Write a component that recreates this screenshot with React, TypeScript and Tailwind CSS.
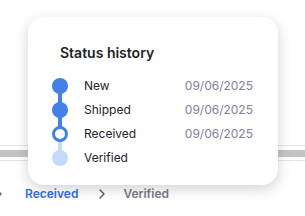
import { ChevronRight } from "lucide-react";

const steps = [
  { label: "New", date: "09/06/2025", state: "done" },
  { label: "Shipped", date: "09/06/2025", state: "done" },
  { label: "Received", date: "09/06/2025", state: "current" },
  { label: "Verified", date: "", state: "todo" },
];

function Dot({ state }: { state: string }) {
  if (state === "current") {
    return <span className="block h-4 w-4 rounded-full border-[3px] border-[#4580e6] bg-white" />;
  }
  if (state === "todo") {
    return <span className="block h-4 w-4 rounded-full bg-[#c5d9fb]" />;
  }
  return <span className="block h-4 w-4 rounded-full bg-[#4580e6]" />;
}

export default function App() {
  return (
    <div
      className="relative h-[216px] w-[305px] overflow-hidden bg-white"
      style={{ fontFamily: "Inter, 'Noto Sans', sans-serif" }}
    >
      {/* page behind the popover */}
      <div className="pt-[145px]">
        <div className="h-px bg-[#e4e4e4]" />
        <div className="mt-[4px] h-[7px] bg-[#c4c4c4]" />
        <div className="mt-[3px] h-px bg-[#e4e4e4]" />
        <div className="mt-[24px] flex items-center text-[12px] font-semibold">
          <ChevronRight className="-ml-[9px] h-4 w-4 text-[#666]" strokeWidth={2} />
          <span className="ml-[18px] text-[#2f6fe0]">Received</span>
          <ChevronRight className="ml-[16px] h-4 w-4 text-[#555]" strokeWidth={2} />
          <span className="ml-[13px] text-[#7a7a8c]">Verified</span>
        </div>
      </div>

      {/* popover */}
      <div className="absolute left-[28px] top-[17px] h-[168px] w-[250px] rounded-[16px] bg-white pl-6 pr-[25px] pt-[26px] shadow-[0_4px_14px_rgba(0,0,0,0.18)]">
        <h3 className="pl-2 text-[14px] font-semibold leading-5 text-[#1f1f24]">Status history</h3>
        <div className="mt-[11px]">
          {steps.map((s, i) => (
            <div key={s.label} className="relative flex h-6 items-center">
              {i < steps.length - 1 && (
                <span
                  className={
                    "absolute left-[6px] top-3 h-6 w-1 " +
                    (steps[i + 1].state === "todo" ? "bg-[#c5d9fb]" : "bg-[#4580e6]")
                  }
                />
              )}
              <span className="relative z-10">
                <Dot state={s.state} />
              </span>
              <span className="ml-4 flex-1 text-[12px] text-[#222226]">{s.label}</span>
              <span className="text-[12px] text-[#80809a]">{s.date}</span>
            </div>
          ))}
        </div>
      </div>
    </div>
  );
}
